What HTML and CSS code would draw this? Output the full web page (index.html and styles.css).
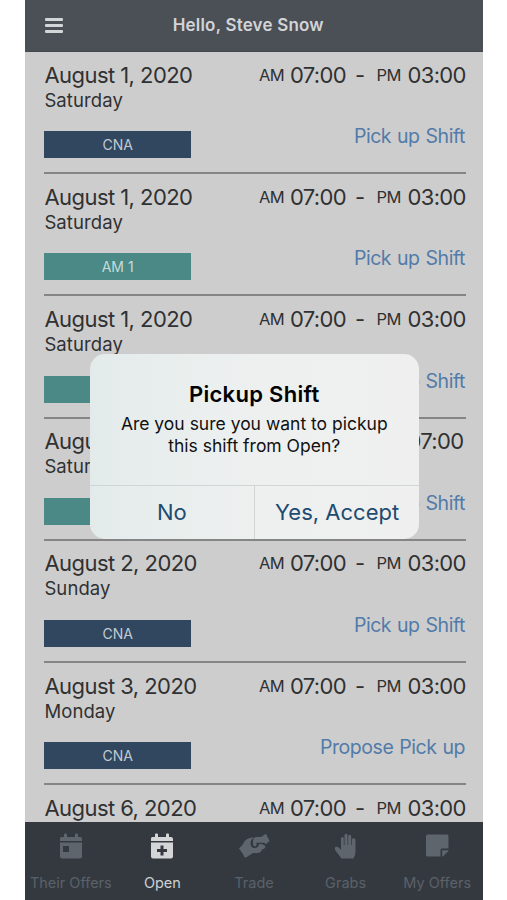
FILE: index.html
```html
<!DOCTYPE html>
<html lang="en">
<head>
<meta charset="utf-8">
<title>Open Shifts</title>
<link rel="stylesheet" href="styles.css">
</head>
<body>
<div class="app">
  <header class="header">
    <div class="menu"><i></i><i></i><i></i></div>
    <h1>Hello, Steve Snow</h1>
  </header>
  <main class="list">
    <article class="shift">
      <div class="info"><div class="date">August 1, 2020</div><div class="day">Saturday</div><div class="tag">CNA</div></div>
      <div class="side"><div class="time"><small>AM</small><span>07:00</span><span>-</span><small>PM</small><span>03:00</span></div><a class="link">Pick up Shift</a></div>
    </article>
    <article class="shift">
      <div class="info"><div class="date">August 1, 2020</div><div class="day">Saturday</div><div class="tag teal">AM 1</div></div>
      <div class="side"><div class="time"><small>AM</small><span>07:00</span><span>-</span><small>PM</small><span>03:00</span></div><a class="link">Pick up Shift</a></div>
    </article>
    <article class="shift">
      <div class="info"><div class="date">August 1, 2020</div><div class="day">Saturday</div><div class="tag teal"></div></div>
      <div class="side"><div class="time"><small>AM</small><span>07:00</span><span>-</span><small>PM</small><span>03:00</span></div><a class="link">Pick up Shift</a></div>
    </article>
    <article class="shift">
      <div class="info"><div class="date">August 1, 2020</div><div class="day">Saturday</div><div class="tag teal"></div></div>
      <div class="side"><div class="time"><small></small><span></span><span></span><small></small><span>07:00</span></div><a class="link">Pick up Shift</a></div>
    </article>
    <article class="shift">
      <div class="info"><div class="date">August 2, 2020</div><div class="day">Sunday</div><div class="tag">CNA</div></div>
      <div class="side"><div class="time"><small>AM</small><span>07:00</span><span>-</span><small>PM</small><span>03:00</span></div><a class="link">Pick up Shift</a></div>
    </article>
    <article class="shift">
      <div class="info"><div class="date">August 3, 2020</div><div class="day">Monday</div><div class="tag">CNA</div></div>
      <div class="side"><div class="time"><small>AM</small><span>07:00</span><span>-</span><small>PM</small><span>03:00</span></div><a class="link">Propose Pick up</a></div>
    </article>
    <article class="shift">
      <div class="info"><div class="date">August 6, 2020</div></div>
      <div class="side"><div class="time"><small>AM</small><span>07:00</span><span>-</span><small>PM</small><span>03:00</span></div></div>
    </article>
  </main>
  <nav class="tabs">
    <div class="tab">
      <svg viewBox="0 0 26 28"><path fill-rule="evenodd" d="M3 4h3V1.500a1 1 0 0 1 1-1h1a1 1 0 0 1 1 1V4h8V1.500a1 1 0 0 1 1-1h1a1 1 0 0 1 1 1V4h2a2 2 0 0 1 2 2v2H2V6a2 2 0 0 1 1-2zM2 9.500h22V23.500a2 2 0 0 1-2 2H4a2 2 0 0 1-2-2zM5 13v6h6v-6z"/></svg>
      <span>Their Offers</span>
    </div>
    <div class="tab active">
      <svg viewBox="0 0 26 28"><path fill-rule="evenodd" d="M3 4h3V1.500a1 1 0 0 1 1-1h1a1 1 0 0 1 1 1V4h8V1.500a1 1 0 0 1 1-1h1a1 1 0 0 1 1 1V4h2a2 2 0 0 1 2 2v2H2V6a2 2 0 0 1 1-2zM2 9.500h22V23.500a2 2 0 0 1-2 2H4a2 2 0 0 1-2-2zM11.500 12.500V16H8v3h3.500v3.500h3V19H18v-3h-3.500v-3.500z"/></svg>
      <span>Open</span>
    </div>
    <div class="tab">
      <svg class="wide" viewBox="0 0 32 28"><path d="M1 15.500L5 11Q7 6 12 5l4-.8Q13 6 12.500 10q0 5 4 5t4.500-4h2q4 .5 4.500 3-1 2-3.500 2.500Q23 20 19 20h-4l-7 4.500Q6 25 5 21z"/><path d="M15 11V7q.5-3 4-3h4L28 .8l3.500 7.200-3.500 3-2-1.200h-7.500v2q0 1.500-1.700 1.500T15 11z"/></svg>
      <span>Trade</span>
    </div>
    <div class="tab">
      <svg viewBox="0 0 26 28"><path d="M8.500 25.500L2.800 18Q1 15 2.500 14T6.200 15L8 17V5.500Q8 4 9.400 4t1.400 1.500V12h.7V2.300Q11.500.8 13 .8t1.500 1.500V12h.7V3.300Q15.200 1.800 16.700 1.800t1.500 1.500V12h.7V6.800q0-1.500 1.800-1.500t1.800 1.500V18q0 4-2 7.500z"/></svg>
      <span>Grabs</span>
    </div>
    <div class="tab">
      <svg viewBox="0 0 26 28"><path d="M3.500 1.500h19.500a1.500 1.500 0 0 1 1.500 1.500V15.500H18a1.500 1.500 0 0 0-1.500 1.500V23.500H3.500a1.500 1.500 0 0 1-1.500-1.500V3a1.500 1.500 0 0 1 1.500-1.500z"/><path d="M18.200 17.300h6.300v.8L19 23.500h-.8z"/></svg>
      <span>My Offers</span>
    </div>
  </nav>
  <section class="dialog">
    <div class="message"><h2>Pickup Shift</h2><p>Are you sure you want to pickup<br>this shift from Open?</p></div>
    <div class="actions"><button>No</button><button>Yes, Accept</button></div>
  </section>
</div>
</body>
</html>
```
FILE: styles.css
```css
* { box-sizing: border-box; }
body { margin: 0; background: #fff; font-family: Inter, "Liberation Sans", sans-serif; color: #303132; }
.app { position: relative; width: 458px; height: 900px; margin-left: 25px; background: #cdcdcd; display: flex; flex-direction: column; overflow: hidden; }
.header { flex: none; height: 52px; background: #4b4f56; display: grid; grid-template-columns: 54px 1fr 85px; align-items: center; padding: 0 0 1px 19.500px; border-bottom: 1px solid #44484e; }
.menu { display: grid; gap: 3px; width: 18px; }
.menu i { height: 3px; background: #d3d6d7; border-radius: 1px; }
h1 { margin: 0; text-align: center; font-size: 17px; line-height: 24px; font-weight: 600; letter-spacing: .2px; color: #d2d4d6; white-space: nowrap; }
.list { flex: 1; min-height: 0; overflow: hidden; }
.shift { height: 122.15px; margin: 0 17px 0 19.400px; padding-top: 9.700px; border-bottom: 2px solid #858585; display: flex; justify-content: space-between; white-space: nowrap; }
.list .shift:first-child { height: 122.300px; }
.date { font-size: 22px; line-height: 26px; letter-spacing: -.55px; }
.day { font-size: 18.500px; line-height: 24px; letter-spacing: .1px; }
.tag { width: 146.500px; height: 27px; margin-top: 19.500px; background: #30475f; color: #c3cad2; font-size: 14px; line-height: 27px; text-align: center; }
.teal { background: #4a8985; color: #c5dcda; }
.side { display: flex; flex-direction: column; align-items: flex-end; }
.time { display: grid; grid-template-columns: 31px 65px 21.500px 31px 58.500px; font-size: 22px; line-height: 26px; letter-spacing: -.65px; align-items: start; }
.time small { font-size: 16.500px; }
.link { margin: 35.500px 1px 0 0; font-size: 19.500px; line-height: 26px; letter-spacing: -.45px; word-spacing: .9px; color: #527ba9; }
.tabs { flex: none; height: 78px; background: #343940; display: grid; grid-template-columns: repeat(5, 1fr); color: #5b6169; }
.tab { display: flex; flex-direction: column; align-items: center; padding-top: 11px; font-size: 14.500px; line-height: 20px; white-space: nowrap; }
.tab svg { width: 26px; height: 28px; fill: #5f656d; margin-bottom: 12px; }
.tab svg.wide { width: 32px; }
.active { color: #cfd1d3; }
.tab.active svg { fill: #d3d5d7; }
.dialog { position: absolute; left: 64.500px; top: 354px; width: 329.500px; height: 184.500px; border-radius: 15px; overflow: hidden; background: linear-gradient(90deg, #e3ebea, #e8eeed 22%, #eef0f0 50%, #efefef); display: flex; flex-direction: column; text-align: center; color: #111; }
.message { flex: 1; padding-top: 25px; }
h2 { margin: 0; font-size: 22px; line-height: 30px; font-weight: 600; letter-spacing: .3px; color: #000; }
p { margin: 4px 0 0; font-size: 17.500px; line-height: 22px; }
.actions { height: 54px; border-top: 1px solid #d0d5d5; display: grid; grid-template-columns: 1fr 1fr; }
button { border: 0; background: none; padding: 0 0 1px; font: 22px/52px Inter, sans-serif; color: #214b70; }
button + button { border-left: 1px solid #d0d5d5; }
```
